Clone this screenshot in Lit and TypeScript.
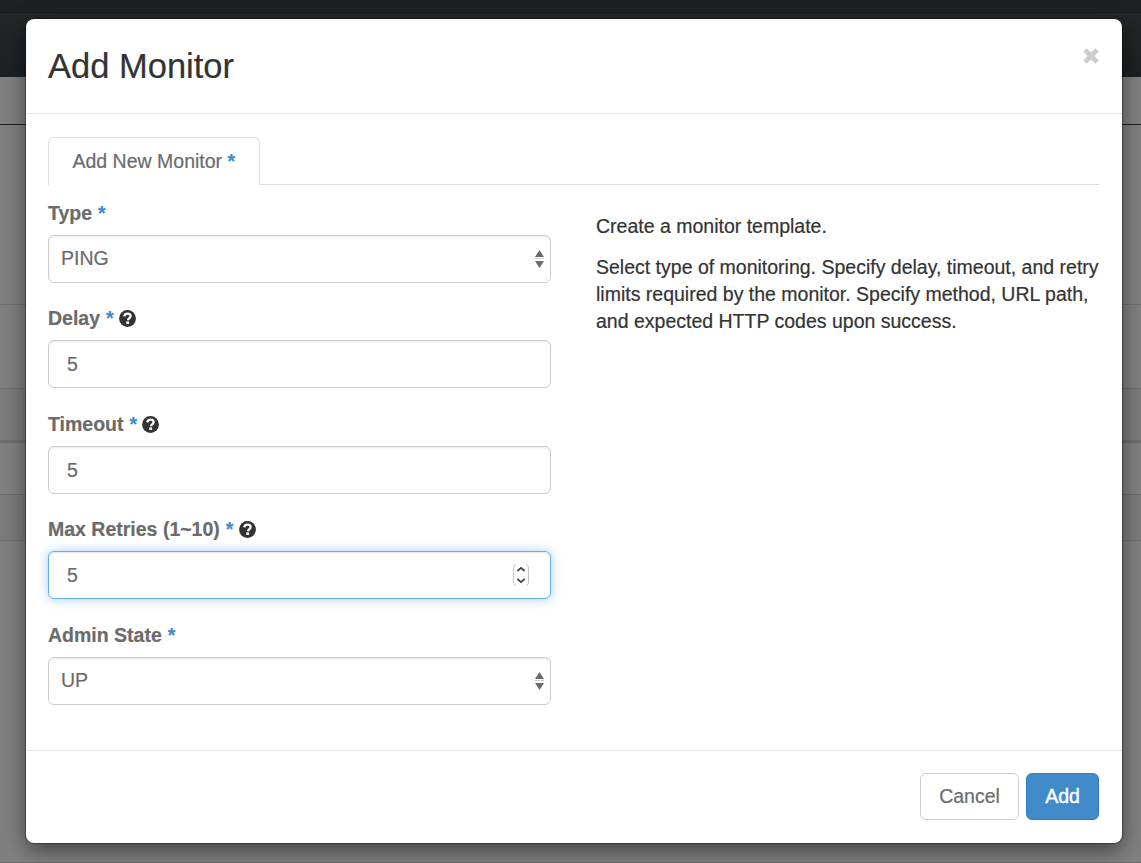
import { LitElement, html, css, nothing } from "lit";
import { customElement, property } from "lit/decorators.js";

@customElement("form-field")
class FormField extends LitElement {
  @property() label = "";
  @property() value = "";
  @property() kind: "select" | "number" = "number";
  @property({ type: Boolean }) help = false;
  @property({ type: Boolean }) active = false;

  static styles = css`
    :host { display: block; }
    .label {
      display: flex; align-items: center; height: 27px; margin-bottom: 8px;
      font-weight: bold; color: #6b6b6b; white-space: pre;
    }
    .star { color: #428bca; margin-left: 6px; font-weight: bold; }
    .help { display: block; width: 17px; height: 17px; margin-left: 5.3px; }
    .box {
      box-sizing: border-box; height: 48px; display: flex; align-items: center;
      border: 1px solid #ccc; border-radius: 6px; background: #fff; color: #6b6b6b;
      box-shadow: inset 0 1.4px 1.4px rgba(0, 0, 0, 0.075);
    }
    .select { padding: 0 6px 2px 12px; }
    .number { padding: 0 21px 0 18px; }
    .active {
      border-color: #66afe9;
      box-shadow: inset 0 1.4px 1.4px rgba(0, 0, 0, 0.075), 0 0 11px rgba(102, 175, 233, 0.6);
    }
    .value { flex: 1; }
    svg { display: block; flex: none; }
    .arrows { margin-top: 2px; }
  `;

  render() {
    return html`
      <div class="label"><span>${this.label}</span><span class="star">*</span>${this.help
        ? html`<svg class="help" viewBox="0 0 17 17">
            <circle cx="8.5" cy="8.5" r="8.4" fill="#333" />
            <path d="M5.3 6.4C5.4 4.6 6.7 3.6 8.6 3.6C10.4 3.6 11.6 4.7 11.6 6.1C11.6 7.3 10.9 7.8 10.1 8.4C9.4 8.9 9.1 9.2 9.1 10.3" fill="none" stroke="#fff" stroke-width="2.3" />
            <rect x="7.3" y="11.4" width="2.8" height="2.5" fill="#fff" />
          </svg>`
        : nothing}</div>
      <div class="box ${this.kind} ${this.active ? "active" : ""}">
        <span class="value">${this.value}</span>
        ${this.kind === "select"
          ? html`<svg class="arrows" width="9" height="18" viewBox="0 0 9 18">
              <path d="M4.5 0L9 7H0ZM4.5 18L9 11H0Z" fill="#6b6b6b" />
              <rect y="8" width="9" height="1" fill="#d0d0d0" />
            </svg>`
          : nothing}
        ${this.active
          ? html`<svg width="16" height="22" viewBox="0 0 16 22">
              <path d="M3 .3Q.5 1 .5 4V18Q.5 21 3 21.7M13 .3Q15.5 1 15.5 4V18Q15.5 21 13 21.7" fill="none" stroke="#c4c4c4" />
              <path d="M4.4 7L8 3.9L11.6 7M4.4 15L8 18.1L11.6 15" fill="none" stroke="#444" stroke-width="1.8" />
            </svg>`
          : nothing}
      </div>
    `;
  }
}

@customElement("app-root")
class AppRoot extends LitElement {
  static styles = css`
    :host {
      display: block; position: relative; width: 1141px; height: 863px; overflow: hidden;
      font: 19.5px/27px "Liberation Sans", Arial, sans-serif; color: #333;
      -webkit-text-stroke: 0.2px currentColor;
    }
    .page { display: flex; flex-direction: column; height: 863px; background: #808080; }
    .page > div { box-sizing: border-box; flex: none; }
    .topbar { height: 14px; background: #1d2124; }
    .banner { height: 63px; border-top: 1px solid #2a2c2f; background: linear-gradient(#242628, #1d2124); }
    .toolbar { height: 48px; border-bottom: 1px solid #1c1e20; }
    .intro { height: 180px; border-bottom: 1px solid #6e6e6e; }
    .filters { height: 84px; border-bottom: 1px solid #6e6e6e; }
    .heading { height: 54px; background: #7c7c7c; border-bottom: 3px solid #6e6e6e; }
    .row { height: 52px; border-bottom: 1px solid #6e6e6e; }
    .foot { height: 46px; background: #7c7c7c; border-bottom: 1px solid #6e6e6e; }
    .rest { height: 322px; border-bottom: 1px solid #6e6e6e; }
    .modal {
      position: absolute; left: 26px; top: 19px; width: 1096px; height: 824px;
      box-sizing: border-box; display: flex; flex-direction: column; background: #fff;
      border-radius: 8px; box-shadow: 0 0 0 1px rgba(0, 0, 0, 0.3), 0 7px 21px rgba(0, 0, 0, 0.5);
    }
    .header {
      box-sizing: border-box; height: 95px; padding: 0 23px 0 22px; display: flex;
      justify-content: space-between; border-bottom: 1px solid #e5e5e5;
    }
    h3 { margin: 27px 0 0; font-size: 34.5px; line-height: 40px; font-weight: 400; }
    .close { margin-top: 29px; display: block; }
    .body { flex: 1; padding: 23px 23px 0 22px; }
    .tabs { display: flex; height: 48px; }
    .tab {
      box-sizing: border-box; width: 212px; padding: 10px 0 0 23.5px; color: #6b6b6b;
      border: 1px solid #ddd; border-bottom: 0; border-radius: 6px 6px 0 0; white-space: pre;
    }
    .rule { flex: 1; border-bottom: 1px solid #ddd; }
    .star { color: #428bca; font-weight: bold; }
    .columns { display: grid; grid-template-columns: 503px 1fr; column-gap: 45px; padding-top: 15px; }
    .fields { display: grid; grid-template-rows: 105px 106px 105px 106px auto; }
    .about { padding-top: 13px; white-space: nowrap; }
    p { margin: 0 0 14px; }
    .footer {
      box-sizing: border-box; height: 93px; padding: 22px 23px 23px; display: flex;
      justify-content: flex-end; gap: 7px; border-top: 1px solid #e5e5e5;
    }
    button {
      box-sizing: border-box; height: 47px; width: 99px; padding: 0; font: inherit; color: #6b6b6b;
      background: #fff; border: 1px solid #ccc; border-radius: 6px;
      -webkit-text-stroke: 0.2px currentColor;
    }
    .primary { width: 73px; color: #fff; background: #428bca; border-color: #357ebd; -webkit-text-stroke-width: 0.4px; }
  `;

  render() {
    return html`
      <div class="page">
        <div class="topbar"></div><div class="banner"></div><div class="toolbar"></div>
        <div class="intro"></div><div class="filters"></div><div class="heading"></div>
        <div class="row"></div><div class="foot"></div><div class="rest"></div>
      </div>
      <div class="modal">
        <div class="header">
          <h3>Add Monitor</h3>
          <svg class="close" width="16" height="16" viewBox="0 0 16 16">
            <path d="M2 2L14 14M14 2L2 14" stroke="#ccc" stroke-width="5" />
          </svg>
        </div>
        <div class="body">
          <div class="tabs">
            <div class="tab"><span>Add New Monitor</span> <span class="star">*</span></div>
            <div class="rule"></div>
          </div>
          <div class="columns">
            <div class="fields">
              <form-field label="Type" value="PING" kind="select"></form-field>
              <form-field label="Delay" value="5" help></form-field>
              <form-field label="Timeout" value="5" help></form-field>
              <form-field label="Max Retries (1~10)" value="5" help active></form-field>
              <form-field label="Admin State" value="UP" kind="select"></form-field>
            </div>
            <div class="about">
              <p>Create a monitor template.</p>
              <p>
                <span>Select type of monitoring. Specify delay, timeout, and retry</span><br />
                <span>limits required by the monitor. Specify method, URL path,</span><br />
                <span>and expected HTTP codes upon success.</span>
              </p>
            </div>
          </div>
        </div>
        <div class="footer">
          <button>Cancel</button>
          <button class="primary">Add</button>
        </div>
      </div>
    `;
  }
}
